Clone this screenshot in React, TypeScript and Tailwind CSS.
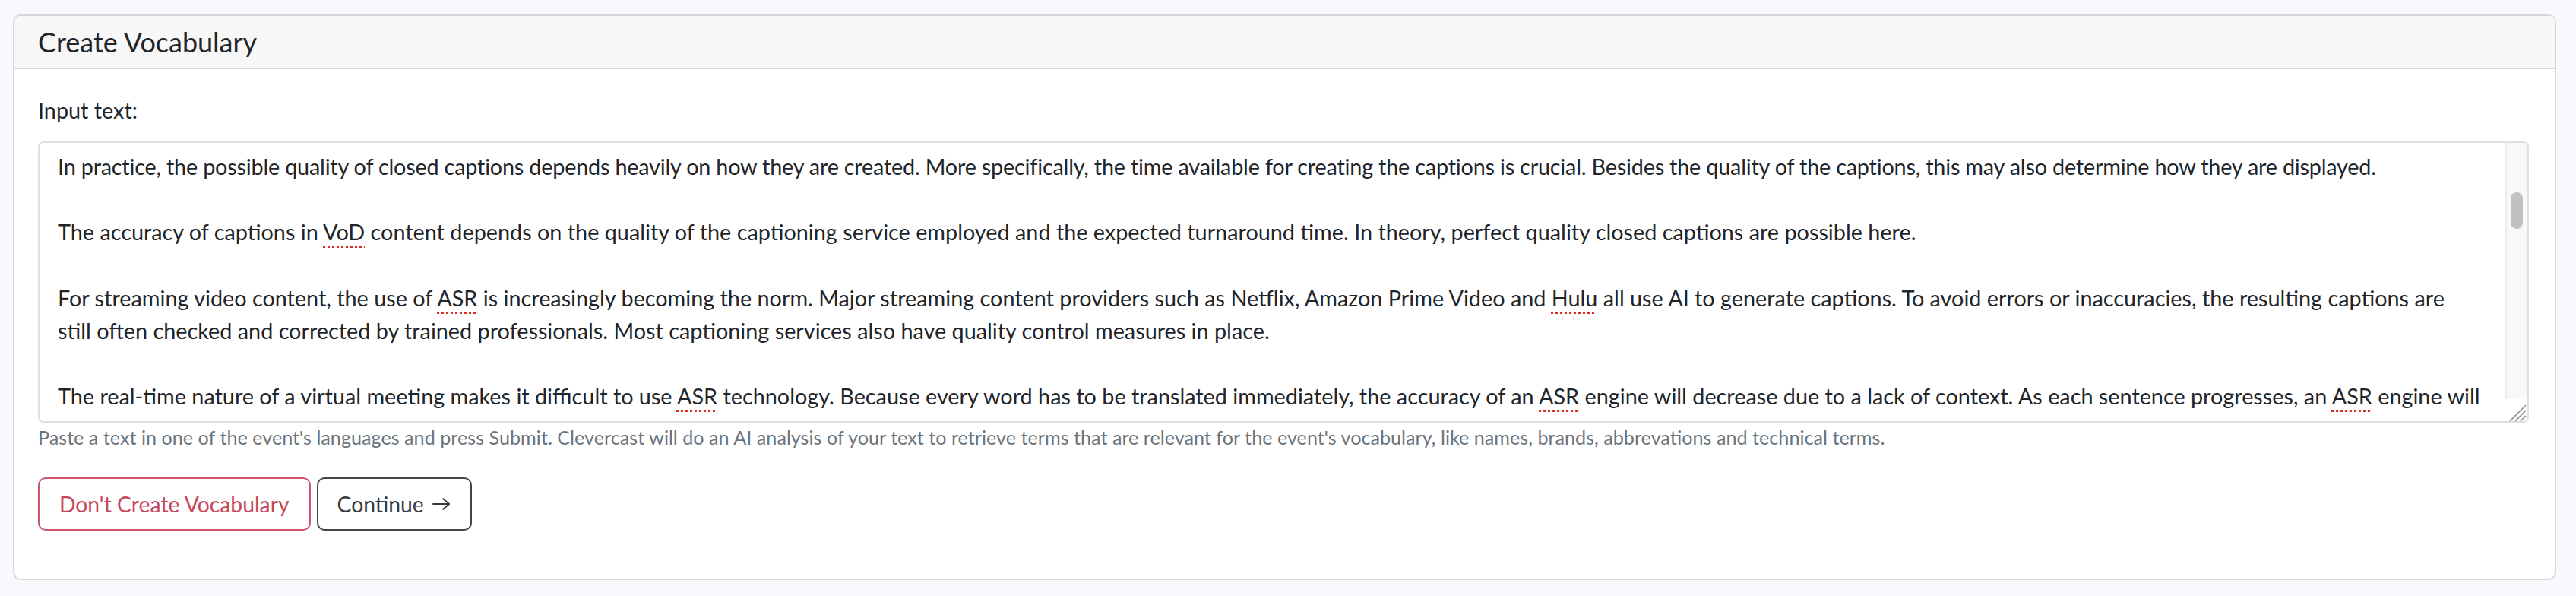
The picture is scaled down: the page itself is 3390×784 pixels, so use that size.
import React from "react";

const U = ({ children }: { children: React.ReactNode }) => (
  <span className="underline decoration-dotted decoration-[#d93025] decoration-[3px] underline-offset-[7px]">
    {children}
  </span>
);

export default function App() {
  return (
    <div className="min-h-screen bg-[#f8f9fc] pt-[19px] pl-[17px] pr-[26px] font-['Lato','Open_Sans',sans-serif] text-[#212529]">
      <div className="rounded-[10px] border-2 border-[#d5d6d8] bg-white overflow-hidden">
        <div className="h-[70px] flex items-center border-b-2 border-[#d6d6d6] bg-[#f7f7f7] px-[31px] text-[36px] leading-[48px]">
          Create Vocabulary
        </div>
        <div className="pl-[31px] pr-[34px] pt-[33px] pb-[63px]">
          <div className="text-[28.8px] leading-[43px] mb-[19px]">Input text:</div>
          <div className="relative flex h-[370px] rounded-[7px] border-2 border-[#e0e0e0] bg-white overflow-hidden">
            <div className="flex-1 min-w-0 overflow-hidden whitespace-nowrap pl-[24px] pr-[19px] pt-[10px] text-[28.8px] leading-[43.2px]">
              <p className="mb-[43.2px] tracking-[-0.2px]">
                In practice, the possible quality of closed captions depends heavily on how they are created. More specifically, the time available for creating the captions is crucial. Besides the quality of the captions, this may also determine how they are displayed.
              </p>
              <p className="mb-[43.2px]">
                The accuracy of captions in <U>VoD</U> content depends on the quality of the captioning service employed and the expected turnaround time. In theory, perfect quality closed captions are possible here.
              </p>
              <p className="mb-[43.2px]">
                For streaming video content, the use of <U>ASR</U> is increasingly becoming the norm. Major streaming content providers such as Netflix, Amazon Prime Video and <U>Hulu</U> all use AI to generate captions. To avoid errors or inaccuracies, the resulting captions are
                <br />
                still often checked and corrected by trained professionals. Most captioning services also have quality control measures in place.
              </p>
              <p>
                The real-time nature of a virtual meeting makes it difficult to use <U>ASR</U> technology. Because every word has to be translated immediately, the accuracy of an <U>ASR</U> engine will decrease due to a lack of context. As each sentence progresses, an <U>ASR</U> engine will
                <br />
                have more context to allow for a better transcription. Therefore, you will notice that the words in the subtitles will be corrected. But this usually does not lead to a better result.
              </p>
            </div>
            <div className="flex w-[29px] flex-col">
              <div className="flex-1 border-l-2 border-[#ececec] bg-[#f8f8f8] pt-[65px] pl-[5px]">
                <div className="h-[48px] w-[16px] rounded-full bg-[#c1c1c1]" />
              </div>
              <div className="h-[29px] bg-white">
                <svg width="29" height="29" viewBox="0 0 29 29">
                  <line x1="27" y1="8" x2="6" y2="29" stroke="#8a8a8a" strokeWidth="1.6" />
                  <line x1="27" y1="15" x2="13" y2="29" stroke="#8a8a8a" strokeWidth="1.6" />
                  <line x1="27" y1="22" x2="20" y2="29" stroke="#8a8a8a" strokeWidth="1.6" />
                </svg>
              </div>
            </div>
          </div>
          <div className="mt-[2px] text-[25.2px] leading-[34px] text-[#6c757d]">
            Paste a text in one of the event's languages and press Submit. Clevercast will do an AI analysis of your text to retrieve terms that are relevant for the event's vocabulary, like names, brands, abbrevations and technical terms.
          </div>
          <div className="mt-[36px] flex gap-[8px]">
            <button className="rounded-[10px] border-2 border-[#cc5568] bg-white px-[26px] py-[12px] text-[28.3px] leading-[42px] text-[#c8455a]">
              Don't Create Vocabulary
            </button>
            <button className="flex items-center gap-[10px] rounded-[10px] border-2 border-[#40454c] bg-white px-[25px] py-[12px] text-[28.3px] leading-[42px] text-[#343a40]">
              Continue
              <svg width="26" height="20" viewBox="0 0 26 20" fill="none" stroke="#343a40" strokeWidth="1.8" strokeLinecap="round" strokeLinejoin="round">
                <line x1="2" y1="10" x2="23" y2="10" />
                <polyline points="15,3 23,10 15,17" />
              </svg>
            </button>
          </div>
        </div>
      </div>
    </div>
  );
}
